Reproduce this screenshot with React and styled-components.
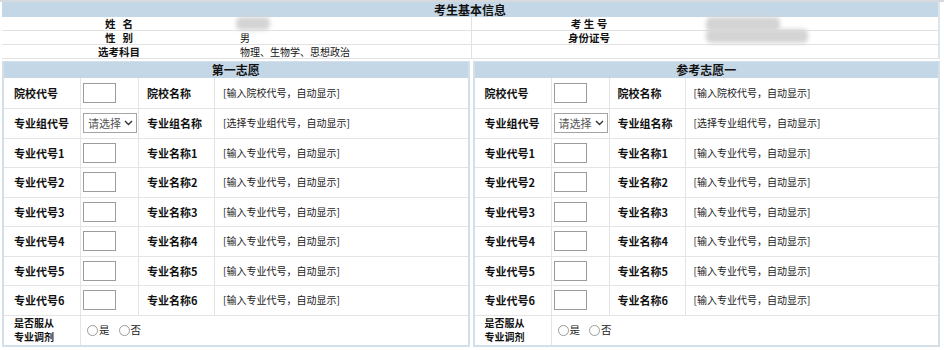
import React from "react";
import styled, { createGlobalStyle } from "styled-components";

const GlobalStyle = createGlobalStyle`
  html, body {
    margin: 0;
    padding: 0;
    background: #fff;
  }
  body {
    font-family: "Noto Sans CJK SC", "Liberation Sans", sans-serif;
    font-size: 11px;
    color: #111;
  }
`;

const Page = styled.div`
  width: 944px;
  height: 350px;
  box-sizing: border-box;
  border-top: 2px solid #d6dadf;
  padding: 0 4px 0 2px;
  overflow: hidden;
`;

const InfoTable = styled.div`
  display: grid;
  grid-template-columns: 234px 236px 234px 1fr;
  border-right: 2px solid #dde5ec;
`;

const Header = styled.div`
  grid-column: ${(p) => (p.$span ? "1 / -1" : "auto")};
  background: #c4d7e6;
  height: ${(p) => p.$h || 15}px;
  line-height: ${(p) => p.$h || 15}px;
  text-align: center;
  font-weight: bold;
  font-size: 12px;
  color: #111;
`;

const InfoCell = styled.div`
  height: 13px;
  line-height: 13px;
  border-bottom: 1px solid #e2e2e2;
  border-right: ${(p) => (p.$divider ? "1px solid #e2e2e2" : "none")};
  text-align: ${(p) => (p.$label ? "center" : "left")};
  font-weight: ${(p) => (p.$label ? "bold" : "normal")};
  padding-left: ${(p) => (p.$label ? "0" : "4px")};
  font-size: ${(p) => (p.$label ? "10.5px" : "10px")};
  position: relative;
  white-space: pre;
  overflow: visible;
`;

const Blur = styled.div`
  position: absolute;
  left: ${(p) => p.$left}px;
  top: ${(p) => p.$top}px;
  width: ${(p) => p.$w}px;
  height: ${(p) => p.$h}px;
  background: #d4d4d4;
  border-radius: 5px;
  filter: blur(2px);
`;

const Panels = styled.div`
  display: grid;
  grid-template-columns: 1fr 1fr;
  gap: 3px;
  margin-top: 2px;
`;

const Panel = styled.div`
  border: 2px solid #d3dfe9;
  border-top: 1px solid #d3dfe9;
  background: #fff;
`;

const Row = styled.div`
  display: grid;
  grid-template-columns: 77px 58px 76px 1fr;
  height: ${(p) => p.$h || 28.5}px;
  border-top: ${(p) => (p.$first ? "none" : "1px solid #e4e4e4")};
`;

const Cell = styled.div`
  display: flex;
  align-items: center;
  padding-left: ${(p) => p.$pad ?? 8}px;
  border-right: ${(p) => (p.$last ? "none" : "1px solid #e4e4e4")};
  font-weight: ${(p) => (p.$label ? "bold" : "normal")};
  font-size: ${(p) => (p.$label ? "11px" : "10px")};
  line-height: 12px;
  color: ${(p) => (p.$label ? "#111" : "#222")};
  grid-column: ${(p) => p.$span || "auto"};
  white-space: nowrap;
`;

const CodeInput = styled.div`
  width: 31px;
  height: 18px;
  border: 1px solid #9c9c9c;
  background: #fff;
`;

const Select = styled.div`
  width: 54px;
  height: 20px;
  box-sizing: border-box;
  border: 1px solid #a4a4a4;
  display: flex;
  align-items: center;
  justify-content: space-between;
  padding: 0 3px 0 4px;
  font-size: 11px;
  color: #555;
  font-weight: normal;
  flex-shrink: 0;
`;

const Radios = styled.div`
  display: flex;
  align-items: center;
  gap: 9px;
  font-size: 10.5px;
`;

const RadioItem = styled.label`
  display: flex;
  align-items: center;
  gap: 1px;
`;

const Circle = styled.span`
  width: 9px;
  height: 9px;
  border: 1px solid #9a9a9a;
  border-radius: 50%;
  display: inline-block;
`;

const TwoLine = styled.span`
  font-size: 10px;
  line-height: 14.5px;
  white-space: normal;
`;

const Chevron = () => (
  <svg width="9" height="6" viewBox="0 0 9 6">
    <path d="M1 1 L4.5 4.5 L8 1" fill="none" stroke="#333" strokeWidth="1.4" />
  </svg>
);

const fields = [1, 2, 3, 4, 5, 6];

const Choice = ({ title }) => (
  <Panel>
    <Header $h={16}>{title}</Header>
    <Row $first $h={30}>
      <Cell $label $pad={10}>院校代号</Cell>
      <Cell $pad={2}><CodeInput /></Cell>
      <Cell $label>院校名称</Cell>
      <Cell $last>[输入院校代号，自动显示]</Cell>
    </Row>
    <Row>
      <Cell $label $pad={10}>专业组代号</Cell>
      <Cell $pad={2}>
        <Select>
          请选择 <Chevron />
        </Select>
      </Cell>
      <Cell $label>专业组名称</Cell>
      <Cell $last>[选择专业组代号，自动显示]</Cell>
    </Row>
    {fields.map((n) => (
      <Row key={n}>
        <Cell $label $pad={10}>专业代号{n}</Cell>
        <Cell $pad={2}><CodeInput /></Cell>
        <Cell $label>专业名称{n}</Cell>
        <Cell $last>[输入专业代号，自动显示]</Cell>
      </Row>
    ))}
    <Row $h={29}>
      <Cell $label $pad={10}>
        <TwoLine>是否服从<br />专业调剂</TwoLine>
      </Cell>
      <Cell $span="2 / -1" $last $pad={6}>
        <Radios>
          <RadioItem><Circle />是</RadioItem>
          <RadioItem><Circle />否</RadioItem>
        </Radios>
      </Cell>
    </Row>
  </Panel>
);

export default function App() {
  return (
    <Page>
      <GlobalStyle />
      <InfoTable>
        <Header $span>考生基本信息</Header>
        <InfoCell $label>{"姓   名"}</InfoCell>
        <InfoCell $divider>
          <Blur $left={0} $top={0} $w={34} $h={13} />
        </InfoCell>
        <InfoCell $label>{"考 生 号"}</InfoCell>
        <InfoCell>
          <Blur $left={0} $top={0} $w={74} $h={14} />
        </InfoCell>
        <InfoCell $label>{"性   别"}</InfoCell>
        <InfoCell $divider>男</InfoCell>
        <InfoCell $label>身份证号</InfoCell>
        <InfoCell>
          <Blur $left={0} $top={-2} $w={102} $h={14} />
        </InfoCell>
        <InfoCell $label>选考科目</InfoCell>
        <InfoCell $divider>物理、生物学、思想政治</InfoCell>
        <InfoCell></InfoCell>
        <InfoCell></InfoCell>
      </InfoTable>
      <Panels>
        <Choice title="第一志愿" />
        <Choice title="参考志愿一" />
      </Panels>
    </Page>
  );
}
